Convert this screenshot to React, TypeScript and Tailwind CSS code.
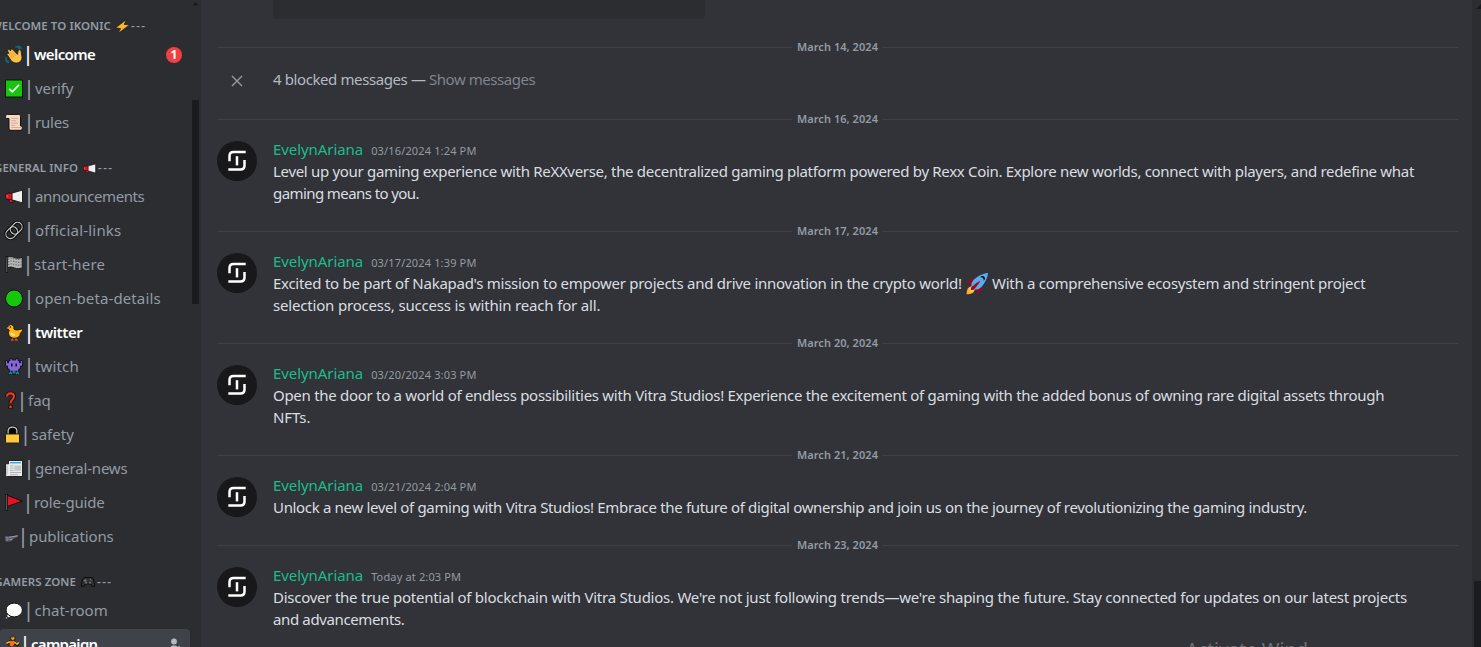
import type { ReactNode } from 'react'
import { clsx } from 'clsx'

// =====================================================
// Server channel list + message history
// =====================================================

interface Channel {
  name: string
  icon: ReactNode
  slot: string // width of the emoji slot
  tracking?: string
  unread?: boolean
  badge?: number
  active?: boolean
}

interface ChannelGroup {
  title: string
  icon: ReactNode
  titleClass: string
  channels: Channel[]
}

interface Message {
  date: string
  time: string
  body: ReactNode
}

// ── Emoji ──

function Emoji({ children, className = 'size-[18px]' }: { children: ReactNode; className?: string }) {
  return (
    <svg viewBox="0 0 18 18" className={clsx('block shrink-0 overflow-visible', className)}>
      {children}
    </svg>
  )
}

const Bolt = ({ className }: { className?: string }) => (
  <Emoji className={className}>
    <path d="M14.500-.5-.5 10.800l7 1L3 18.500 18.500 7l-7.300-.9z" fill="#fdb62f" stroke="#17130b" strokeWidth=".8" strokeLinejoin="round" />
  </Emoji>
)

const Wave = () => (
  <Emoji>
    <path d="M10.500 1.400c2.200-.3 3.600.9 4 2.600M13 .6c1.800.1 2.900 1.200 3.200 2.700M1 11.600c-.2 2.200.8 3.600 2.600 4.200M.7 14.400c.3 1.500 1.200 2.400 2.600 2.700" fill="none" stroke="#176a7c" strokeWidth="1.100" strokeLinecap="round" />
    <path d="M2.600 9.800C1.300 8.600 2.400 7 3.800 7.900L2.700 5.600c-.6-1.500 1.300-2.400 2.200-1.100l.7 1c-.6-1.800 1.500-2.800 2.500-1.300l4.400 4.700.6-3.600c.4-1.500 2.700-1.200 3 .4l.9 5.800c.3 3.400-2.600 6.200-6 6-2.200-.1-3.800-1.100-5-2.600z" fill="#fbc04a" stroke="#1b150c" strokeWidth=".8" strokeLinejoin="round" />
    <path d="m5.300 7 3.600 4.200M7.400 6l3.400 4.200M4.100 8.800l3.300 3.700" stroke="#d98a1c" strokeWidth=".6" strokeLinecap="round" />
  </Emoji>
)

const Check = () => (
  <Emoji>
    <rect x=".5" y=".5" width="17" height="17" fill="#16c60c" stroke="#0c120c" />
    <path d="m4.300 9.300 3 3L14 5.400" fill="none" stroke="#fff" strokeWidth="1.700" />
  </Emoji>
)

const Scroll = () => (
  <Emoji>
    <path d="M2.200.9h11.300c1.500 0 2 1 2 2.200v9.400h.4c1.500 0 1.600 1.100 1.300 2.600-.2 1-.8 1.700-1.800 1.700H6c-1.500 0-2-.8-2-2.200V5H1.600C.6 5 .5 3.500.7 2.500.9 1.400 1.300.9 2.200.9z" fill="#f7d7c4" stroke="#17110e" strokeWidth="1" />
    <path d="M6.200 5h7M6.200 7.300h5M6.200 9.600h7M6.200 11.900h4" stroke="#c39a82" strokeWidth=".7" />
    <path d="M6.300 14h10.300" stroke="#d9ac94" strokeWidth="1" />
  </Emoji>
)

const Megaphone = ({ className }: { className?: string }) => (
  <Emoji className={className}>
    <path d="M3.500 10.500h3.800l.6 3.500c.1.700-.3 1-.9 1H5.300c-.6 0-.9-.3-1-.9z" fill="#e81224" stroke="#151515" strokeWidth=".9" />
    <path d="M6.600 5.700 17.500 2.600v12.800L6.600 12.200z" fill="#efefef" stroke="#151515" strokeWidth=".9" />
    <path d="M7 5.700H3.200C1.200 5.700.6 7 .6 8.800s.6 3.100 2.600 3.100H7z" fill="#e81224" stroke="#151515" strokeWidth=".9" />
    <path d="M2 7.500v2.700" stroke="#e9a0a6" strokeWidth=".6" />
  </Emoji>
)

const Link = () => (
  <Emoji>
    <g fill="none" transform="rotate(-45 9 9)">
      <rect x="-.6" y="4.500" width="12.800" height="9" rx="4.500" stroke="#0d0d0d" strokeWidth="3.400" />
      <rect x="5.800" y="4.500" width="12.800" height="9" rx="4.500" stroke="#0d0d0d" strokeWidth="3.400" />
      <rect x="-.6" y="4.500" width="12.800" height="9" rx="4.500" stroke="#c9cacb" strokeWidth="1.100" />
      <rect x="5.800" y="4.500" width="12.800" height="9" rx="4.500" stroke="#c9cacb" strokeWidth="1.100" />
    </g>
  </Emoji>
)

const Finish = () => (
  <Emoji>
    <path d="M2.400 2c2.500-1.600 4.700-.9 7 .1 2.500 1 5 .9 7.900-.3v10.400c-2.700 1.200-5.400 1.200-7.900.2-2.300-.9-4.500-1.400-7 0z" fill="#b4b4b4" stroke="#131313" strokeWidth=".9" />
    <path d="M3 3.700c5-3 8 2 13.700-.2M3 6.500c5-3 8 2 13.700-.2M3 9.300c5-3 8 2 13.700-.2" fill="none" stroke="#6a6a6a" strokeWidth="1.200" strokeDasharray="1.300 1.300" />
    <path d="M1.800.8v16.400" stroke="#111" strokeWidth="2.400" />
    <path d="M1.800 1.500v15" stroke="#7d7d7d" strokeWidth=".8" />
  </Emoji>
)

const GreenCircle = () => (
  <Emoji>
    <circle cx="9" cy="9" r="8.500" fill="#16c60c" stroke="#0d120d" />
  </Emoji>
)

const Chick = () => (
  <Emoji>
    <path d="M7.800 13.500 7.400 16.500M11 13.500v3M6 16.500h2.600M10 16.500h2.700" stroke="#d8501b" strokeWidth="1.400" />
    <path d="M.7 4.800 3.200 3C4 1.300 5.500.8 6.900 1.300c1.700.6 2.300 2.200 1.900 4l.8.900 2.900.3 5.100-1.300c-.1 2.700-1.100 3.700-2.300 4.500 0 3.200-2.300 5-5.500 5-3.700 0-6.500-2-6.300-5.400.1-1 .4-1.800.8-2.600L3 5.600z" fill="#fdb913" stroke="#1a1409" strokeWidth=".9" strokeLinejoin="round" />
    <path d="M5 9.300c2 .1 4.300.3 5.600 2.400-1.700 1.400-4.300.9-5.600-2.400z" fill="#ffe08a" />
    <path d="M.9 4.800 3.300 3.300l.5 1.900z" fill="#f0631c" />
    <circle cx="5.400" cy="3.600" r=".8" fill="#1a1409" />
  </Emoji>
)

const Monster = () => (
  <Emoji>
    <path d="M5 .9h2.200v1.600h3.600V.9H13v2.300h1.500v2.300l1-.1V3h2v5.500h-2v3h-1.700v2.300H4.200v-2.300H2.500v-3h-2V3h2v2.400l1 .1V3.200H5z" fill="#8467d9" stroke="#15101f" strokeWidth=".9" />
    <path d="M6 6h1.600v3H6zM10.400 6H12v3h-1.600z" fill="#17121f" />
    <path d="M3.200 14.800h11.600v2.500H3.200z" fill="#0e1a1d" />
    <path d="M4 16.700l1.500-2 1.600 2M8.300 16v-2.600M9.800 16v-2.600M11 16.700l1.500-2 1.500 2" fill="none" stroke="#1aa0a4" strokeWidth="1.100" />
  </Emoji>
)

const Question = () => (
  <svg viewBox="0 0 11 18" className="block h-[18px] w-[11px] shrink-0">
    <path d="M2 5C2 2.900 3.400 1.900 5.400 1.900c2.200 0 3.600 1.200 3.600 3.200C9 8 5.500 8 5.500 11.800" fill="none" stroke="#140c0a" strokeWidth="3.800" />
    <circle cx="5.500" cy="15.500" r="2.300" fill="#140c0a" />
    <path d="M2 5C2 2.900 3.400 1.900 5.400 1.900c2.200 0 3.600 1.200 3.600 3.200C9 8 5.500 8 5.500 11.800" fill="none" stroke="#f03a17" strokeWidth="2.100" />
    <circle cx="5.500" cy="15.500" r="1.400" fill="#f03a17" />
  </svg>
)

const Lock = () => (
  <svg viewBox="0 0 15 18" className="block h-[18px] w-[15px] shrink-0">
    <path d="M3.100 9V5.600c0-2.500 2-4 4.400-4s4.400 1.500 4.400 4V9" fill="#050505" stroke="#0e0e0e" strokeWidth="3" />
    <path d="M3.100 9V5.600c0-2.500 2-4 4.400-4s4.400 1.500 4.400 4V9" fill="none" stroke="#c4c6c8" strokeWidth="1.200" />
    <rect x=".5" y="8.500" width="14" height="9" rx=".8" fill="#ffc83d" stroke="#17130a" strokeWidth=".9" />
  </svg>
)

const Newspaper = () => (
  <Emoji>
    <path d="M.5 4.300h3V1h14v16H2.300c-1.200 0-1.800-.7-1.800-1.800z" fill="#e9eaea" stroke="#151515" strokeWidth=".9" />
    <path d="M5 3.200h11" stroke="#2ea7e0" strokeWidth="1.400" />
    <path d="M5 6.300h3.500M5 8.600h3.500M5 10.900h3.500M5 13h11M5 15.200h8M2 6v9" stroke="#9a9c9f" strokeWidth=".7" />
    <rect x="9.300" y="6" width="6.700" height="5.200" fill="#c3c5c8" />
  </Emoji>
)

const RedFlag = () => (
  <Emoji>
    <path d="M2.400 1.900 17.300 7.600 2.400 12.900z" fill="#e81224" stroke="#140c0c" strokeWidth="1" />
    <path d="M1.700.5v17" stroke="#0d0d0d" strokeWidth="2.400" />
    <path d="M1.700 1.200v15.600" stroke="#7b7d80" strokeWidth=".8" />
  </Emoji>
)

const Telescope = () => (
  <svg viewBox="0 0 15 18" className="-ml-px block h-[18px] w-[15px] shrink-0">
    <path d="M.5 9.800c0-1 .7-1.500 1.600-1.500l6.500.1L14 7l.6 2.600-5 1.800c-.8 2-2.500 2.700-4.700 3.200-2.500.6-4.200-.7-4.400-2.900z" fill="#5a5c68" stroke="#1b1c20" strokeWidth=".5" />
    <path d="m5 9.800 8.500-1.500" stroke="#9fa3b1" strokeWidth=".9" />
    <path d="M2 10c1.200-.5 2 .3 2 1.400s-1 1.600-1.800 1.200M6 12.300l2.500-.8" fill="none" stroke="#9699ab" strokeWidth=".9" />
  </svg>
)

const Gamepad = ({ className }: { className?: string }) => (
  <Emoji className={className}>
    <path d="M5.500 3.200h7c2 0 3 .9 3.600 3l1.500 6.200c.5 2.600-1.800 3.500-3.200 1.700l-2-2.600H5.600l-2 2.600c-1.400 1.800-3.700.9-3.200-1.700l1.500-6.200c.6-2.100 1.600-3 3.600-3z" fill="#303234" stroke="#0c0c0c" strokeWidth="1.400" />
    <path d="M3.500 7h3.600M5.300 5.200v3.600" stroke="#85888c" strokeWidth="1" />
    <circle cx="12.300" cy="5.700" r=".8" fill="#3fa34d" />
    <circle cx="14" cy="7.300" r=".8" fill="#c13a3a" />
    <circle cx="11.600" cy="10" r="1.200" fill="#77797c" />
    <circle cx="6.600" cy="10" r="1.200" fill="#77797c" />
  </Emoji>
)

const Bubble = () => (
  <Emoji>
    <circle cx="3.700" cy="14.300" r="1.900" fill="#fff" stroke="#111" strokeWidth=".8" />
    <ellipse cx="9.200" cy="8.500" rx="8.200" ry="6.900" fill="#fff" stroke="#111" strokeWidth="1" />
    <circle cx="1.500" cy="16.400" r=".9" fill="#fff" stroke="#111" strokeWidth=".6" />
  </Emoji>
)

const Runner = () => (
  <svg viewBox="0 0 14 18" className="block h-[18px] w-[14px] shrink-0 overflow-visible">
    <path d="M5.500 6.500 1.800 7.700M9 7l3.200 2.200 1.600-2" fill="none" stroke="#17110b" strokeWidth="3" />
    <path d="m6.500 10-1.600 3.200-3.700.6M8 11l2.400 2.400-.6 4" fill="none" stroke="#1268b3" strokeWidth="2.200" />
    <path d="M4.300 5.300 9.400 4.400l1 3.100-2.700 4.200-3.400-1.100z" fill="#f5701f" stroke="#17110b" strokeWidth=".7" />
    <path d="M4.800 6.300 1.400 7.700M9.500 6.500l2.600 2.200 1.700-2" fill="none" stroke="#fdb62f" strokeWidth="1.500" />
    <circle cx="7.800" cy="2.600" r="2.300" fill="#e7a22e" stroke="#17110b" strokeWidth=".8" />
    <path d="M5.500 2.300C5.600.7 7 0 8.300.3c1 .2 1.500.7 1.700 1.200z" fill="#6b3d1c" />
  </svg>
)

const Rocket = () => (
  <svg viewBox="0 0 36 36" className="relative -top-px -my-1 ml-px inline-block size-[22px] align-middle">
    <path d="M1 17l8-7 16 1 1 16-7 8s.001-5.999-6-12-12-6-12-6z" fill="#a0041e" />
    <path d="M.973 35s-.036-7.979 2.985-11S15 21.187 15 21.187 14.999 29 11.999 32c-3 3-11.026 3-11.026 3z" fill="#ffac33" />
    <circle cx="8.999" cy="27" r="4" fill="#ffcc4d" />
    <path d="M35.999 0s-10 0-22 10c-6 5-6 14-4 16s11 2 16-4c10-12 10-22 10-22z" fill="#55acee" />
    <path d="M26.999 5c-1.623 0-3.013.971-3.641 2.360.502-.227 1.055-.360 1.641-.360 2.209 0 4 1.791 4 4 0 .586-.133 1.139-.359 1.640 1.389-.627 2.359-2.017 2.359-3.640 0-2.209-1.791-4-4-4z" />
    <path d="M8 28s0-4 1-5 13.001-10.999 14-10-9.001 13-10.001 14S8 28 8 28z" fill="#a0041e" />
  </svg>
)

// ── Data ──

const groups: ChannelGroup[] = [
  {
    title: 'WELCOME TO IKONIC',
    icon: <Bolt className="size-[13px]" />,
    titleClass: 'w-[111px]',
    channels: [
      { name: 'welcome', icon: <Wave />, slot: 'w-[18px]', tracking: 'tracking-[-0.6px]', unread: true, badge: 1 },
      { name: 'verify', icon: <Check />, slot: 'w-[19px]', tracking: 'tracking-[-0.1px]' },
      { name: 'rules', icon: <Scroll />, slot: 'w-[19px]', tracking: 'tracking-[-0.2px]' },
    ],
  },
  {
    title: 'GENERAL INFO',
    icon: <Megaphone className="size-[13px]" />,
    titleClass: 'w-[78px]',
    channels: [
      { name: 'announcements', icon: <Megaphone />, slot: 'w-[19px]', tracking: 'tracking-[-0.4px]' },
      { name: 'official-links', icon: <Link />, slot: 'w-[19px]', tracking: 'tracking-[0.2px]' },
      { name: 'start-here', icon: <Finish />, slot: 'w-[18px]', tracking: 'tracking-[0.15px]' },
      { name: 'open-beta-details', icon: <GreenCircle />, slot: 'w-[19px]', tracking: 'tracking-[0.12px]' },
      { name: 'twitter', icon: <Chick />, slot: 'w-[19px]', tracking: 'tracking-[-0.4px]', unread: true },
      { name: 'twitch', icon: <Monster />, slot: 'w-[19px]', tracking: 'tracking-[0.15px]' },
      { name: 'faq', icon: <Question />, slot: 'w-3' },
      { name: 'safety', icon: <Lock />, slot: 'w-[15.5px]' },
      { name: 'general-news', icon: <Newspaper />, slot: 'w-[19px]', tracking: 'tracking-[-0.2px]' },
      { name: 'role-guide', icon: <RedFlag />, slot: 'w-[18px]', tracking: 'tracking-[-0.15px]' },
      { name: 'publications', icon: <Telescope />, slot: 'w-[13px]', tracking: 'tracking-[-0.1px]' },
    ],
  },
  {
    title: 'GAMERS ZONE',
    icon: <Gamepad className="size-[14px]" />,
    titleClass: 'w-[76px]',
    channels: [
      { name: 'chat-room', icon: <Bubble />, slot: 'w-[18.5px]' },
      { name: 'campaign', icon: <Runner />, slot: 'w-[15px]', tracking: 'tracking-[-0.7px]', unread: true, active: true },
    ],
  },
]

const messages: Message[] = [
  {
    date: 'March 16, 2024',
    time: '03/16/2024 1:24 PM',
    body: (
      <>
        <span className="tracking-[-0.309px]">Level up your gaming experience with ReXXverse, the decentralized gaming platform powered by Rexx Coin. Explore new worlds, connect with players, and redefine what</span>
        <br />
        <span className="tracking-[-0.58px]">gaming means to you.</span>
      </>
    ),
  },
  {
    date: 'March 17, 2024',
    time: '03/17/2024 1:39 PM',
    body: (
      <>
        <span className="tracking-[-0.27px]">Excited to be part of Nakapad's mission to empower projects and drive innovation in the crypto world! <Rocket /> With a comprehensive ecosystem and stringent project</span>
        <br />
        <span className="tracking-[-0.18px]">selection process, success is within reach for all.</span>
      </>
    ),
  },
  {
    date: 'March 20, 2024',
    time: '03/20/2024 3:03 PM',
    body: (
      <>
        <span className="tracking-[-0.288px]">Open the door to a world of endless possibilities with Vitra Studios! Experience the excitement of gaming with the added bonus of owning rare digital assets through</span>
        <br />
        <span className="tracking-[-0.1px]">NFTs.</span>
      </>
    ),
  },
  {
    date: 'March 21, 2024',
    time: '03/21/2024 2:04 PM',
    body: (
      <span className="tracking-[-0.332px]">Unlock a new level of gaming with Vitra Studios! Embrace the future of digital ownership and join us on the journey of revolutionizing the gaming industry.</span>
    ),
  },
  {
    date: 'March 23, 2024',
    time: 'Today at 2:03 PM',
    body: (
      <>
        <span className="tracking-[-0.247px]">Discover the true potential of blockchain with Vitra Studios. We're not just following trends—we're shaping the future. Stay connected for updates on our latest projects</span>
        <br />
        <span className="tracking-[-0.37px]">and advancements.</span>
      </>
    ),
  },
]

// ── Sidebar ──

function ChannelRow({ channel }: { channel: Channel }) {
  const { name, icon, slot, tracking, unread, badge, active } = channel
  return (
    <div className="h-[34px] py-px">
      <div
        className={clsx(
          'flex h-8 w-[190px] items-center rounded pr-2 pl-[5px] text-[15px]',
          active && 'bg-[#404249]',
          unread ? 'font-semibold text-white' : 'text-[#949ba4]'
        )}
      >
        <span className={clsx('shrink-0 -translate-y-[0.5px]', slot)}>{icon}</span>
        <span className="-mr-px -ml-px w-[13px] shrink-0 -translate-x-[0.5px] -translate-y-px text-center text-[19px] leading-8 font-medium">|</span>
        <span className={clsx('flex-1 -translate-y-px whitespace-nowrap', tracking)}>{name}</span>
        {badge && (
          <span className="flex size-4 items-center justify-center rounded-full bg-[#f23f42] text-xs font-bold text-white">
            {badge}
          </span>
        )}
        {active && (
          <svg viewBox="0 0 16 16" className="size-4" fill="#b5bac1">
            <circle cx="8" cy="4.500" r="2.900" />
            <path d="M3 14c0-3.300 2-5.400 5-5.400 1.800 0 3.200.7 4 1.900V14z" />
            <path d="M13 9v6M10 12h6" stroke="#b5bac1" strokeWidth="1.500" />
          </svg>
        )}
      </div>
    </div>
  )
}

function Sidebar() {
  return (
    <aside className="flex w-[201px] shrink-0 bg-[#2b2d31]">
      <div className="-mt-0.5 w-[190px] shrink-0">
        {groups.map((group) => (
          <section key={group.title}>
            <h3 className="flex h-10 items-center pt-4 text-[11.5px] font-semibold text-[#949ba4]">
              <span className={clsx('flex shrink-0 justify-end tracking-[0.06px] whitespace-nowrap', group.titleClass)}>{group.title}</span>
              <span className="ml-[5px]">{group.icon}</span>
              <span className="ml-0.5 tracking-[1.5px]">---</span>
            </h3>
            {group.channels.map((channel) => (
              <ChannelRow key={channel.name} channel={channel} />
            ))}
          </section>
        ))}
      </div>
      {/* scrollbar */}
      <div className="ml-0.5 flex w-[7px] flex-col items-center">
        <svg viewBox="0 0 7 4" className="mt-[2px] h-1 w-[7px] shrink-0" fill="#1a1b1e">
          <path d="M3.500 0 6.500 3.500H.5z" />
        </svg>
        <div className="mt-[94px] h-[204px] w-[7px] shrink-0 bg-[#1a1b1e]" />
      </div>
    </aside>
  )
}

// ── Messages ──

function DateDivider({ date }: { date: string }) {
  return (
    <div className="mr-3.5 ml-4 flex h-5 items-center gap-[5px]">
      <div className="h-px flex-1 bg-[#3f4147]" />
      <span className="text-[11px] leading-5 font-semibold tracking-[0.05px] text-[#949ba4]">{date}</span>
      <div className="h-px flex-1 bg-[#3f4147]" />
    </div>
  )
}

function Avatar() {
  return (
    <svg viewBox="0 0 40 40" className="mt-[3px] size-10 shrink-0">
      <circle cx="20" cy="20" r="20" fill="#18171a" />
      <g fill="none" stroke="#fff" strokeWidth="2.500">
        <path d="M28.700 11H16.500c-2.600 0-4 1.400-4 4v5.300" />
        <path d="M11.300 28.400h12.200c2.600 0 4-1.400 4-4v-5.300" />
        <path d="M20 15.200v9.200" />
      </g>
    </svg>
  )
}

function MessageItem({ message }: { message: Message }) {
  return (
    <article className="flex gap-4 pt-[9px] pr-10 pb-[17px] pl-4">
      <Avatar />
      <div>
        <div className="flex h-[22px] items-baseline gap-2 leading-[22px]">
          <span className="text-[15px] tracking-[-0.07px] text-[#1abc8e]">EvelynAriana</span>
          <time className="text-[11px] tracking-[0.15px] text-[#949ba4]">{message.time}</time>
        </div>
        <p className="text-[15px] leading-[22px] whitespace-nowrap text-[#dbdee1]">{message.body}</p>
      </div>
    </article>
  )
}

export default function App() {
  return (
    <div className="relative flex h-[647px] w-[1481px] overflow-hidden bg-[#313338] font-['Noto_Sans','Liberation_Sans',sans-serif]">
      <Sidebar />

      <main className="h-full min-w-0 flex-1 overflow-hidden">
        <div className="mb-[18px] ml-[72px] h-[19px] w-[432px] rounded-b bg-[#2b2d31]" />
        <DateDivider date="March 14, 2024" />
        <div className="flex h-[52px] items-center pb-2 pl-[30px] text-[15px] text-[#b5bac1]">
          <svg viewBox="0 0 12 12" className="mt-1 size-3" fill="none" stroke="#949ba4" strokeWidth="1.400">
            <path d="m1 1 10 10M11 1 1 11" />
          </svg>
          <span className="ml-[30px] tracking-[-0.4px] whitespace-pre">4 blocked messages — </span>
          <span className="tracking-[-0.45px] text-[#80848e]">Show messages</span>
        </div>
        {messages.map((message) => (
          <div key={message.date}>
            <DateDivider date={message.date} />
            <MessageItem message={message} />
          </div>
        ))}
      </main>

      {/* scrollbar */}
      <div className="flex w-[9px] shrink-0 flex-col items-end justify-between bg-[#2b2d31]">
        <svg viewBox="0 0 5 5" className="mt-1 size-[5px]" fill="#1a1b1e">
          <path d="M5 0v5H0z" />
        </svg>
        <div className="h-[66px] w-[7px] bg-[#1a1b1e]" />
      </div>

      {/* system watermark over the window */}
      <div className="absolute top-[638px] left-[1186px] h-[9px] w-[122px] overflow-hidden text-[19px] leading-[25px] whitespace-nowrap text-[#6f7175]">
        Activate Windows
      </div>
    </div>
  )
}
